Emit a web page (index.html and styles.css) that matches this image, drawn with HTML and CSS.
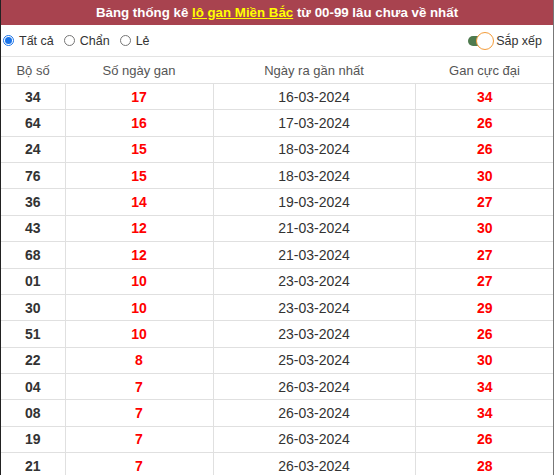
FILE: index.html
```html
<!DOCTYPE html>
<html lang="vi">
<head>
<meta charset="utf-8">
<link rel="stylesheet" href="styles.css">
</head>
<body>
<div class="box">
  <div class="title">Bảng thống kê <a href="#" class="hl">lô gan Miền Bắc</a> từ 00-99 lâu chưa về nhất</div>
  <div class="controls">
    <div class="radios">
      <label class="opt"><span class="radio on"></span>Tất cả</label>
      <label class="opt"><span class="radio"></span>Chẩn</label>
      <label class="opt"><span class="radio"></span>Lẻ</label>
    </div>
    <div class="sort">
      <span class="toggle"><span class="track"></span><span class="knob"></span></span>
      <span>Sắp xếp</span>
    </div>
  </div>
  <table class="tbl">
    <colgroup><col class="c1"><col class="c2"><col class="c3"><col class="c4"></colgroup>
    <thead>
      <tr><th>Bộ số</th><th>Số ngày gan</th><th>Ngày ra gần nhất</th><th>Gan cực đại</th></tr>
    </thead>
    <tbody>
      <tr><td class="n">34</td><td class="r">17</td><td class="d">16-03-2024</td><td class="r">34</td></tr>
      <tr><td class="n">64</td><td class="r">16</td><td class="d">17-03-2024</td><td class="r">26</td></tr>
      <tr><td class="n">24</td><td class="r">15</td><td class="d">18-03-2024</td><td class="r">26</td></tr>
      <tr><td class="n">76</td><td class="r">15</td><td class="d">18-03-2024</td><td class="r">30</td></tr>
      <tr><td class="n">36</td><td class="r">14</td><td class="d">19-03-2024</td><td class="r">27</td></tr>
      <tr><td class="n">43</td><td class="r">12</td><td class="d">21-03-2024</td><td class="r">30</td></tr>
      <tr><td class="n">68</td><td class="r">12</td><td class="d">21-03-2024</td><td class="r">27</td></tr>
      <tr><td class="n">01</td><td class="r">10</td><td class="d">23-03-2024</td><td class="r">27</td></tr>
      <tr><td class="n">30</td><td class="r">10</td><td class="d">23-03-2024</td><td class="r">29</td></tr>
      <tr><td class="n">51</td><td class="r">10</td><td class="d">23-03-2024</td><td class="r">26</td></tr>
      <tr><td class="n">22</td><td class="r">8</td><td class="d">25-03-2024</td><td class="r">30</td></tr>
      <tr><td class="n">04</td><td class="r">7</td><td class="d">26-03-2024</td><td class="r">34</td></tr>
      <tr><td class="n">08</td><td class="r">7</td><td class="d">26-03-2024</td><td class="r">34</td></tr>
      <tr><td class="n">19</td><td class="r">7</td><td class="d">26-03-2024</td><td class="r">26</td></tr>
      <tr><td class="n">21</td><td class="r">7</td><td class="d">26-03-2024</td><td class="r">28</td></tr>
    </tbody>
  </table>
</div>
</body>
</html>
```

FILE: styles.css
```css
html, body {
  margin: 0;
  padding: 0;
  background: #fff;
}
body {
  font-family: "Liberation Sans", Arial, sans-serif;
  color: #333;
}
.box {
  width: 554px;
  box-sizing: border-box;
  border-left: 1px solid #222;
  border-right: 1px solid #777;
  height: 475px;
  overflow: hidden;
}
.title {
  background: #a8434f;
  color: #fff;
  font-weight: bold;
  font-size: 13.3px;
  height: 25px;
  line-height: 25px;
  text-align: center;
}
.title .hl {
  color: #ffff00;
  text-decoration: underline;
}
.controls {
  display: flex;
  justify-content: space-between;
  align-items: center;
  height: 31px;
  padding: 0 11px 0 2px;
  font-size: 12.5px;
  color: #333;
  border-bottom: 1px solid #e3e3e3;
}
.radios {
  display: flex;
  align-items: center;
  gap: 10px;
}
.opt {
  display: flex;
  align-items: center;
  gap: 5px;
}
.radio {
  width: 11px;
  height: 11px;
  border: 1px solid #767676;
  border-radius: 50%;
  box-sizing: border-box;
  background: #fff;
  position: relative;
}
.radio.on {
  border: 1px solid #1a73e8;
}
.radio.on::after {
  content: "";
  position: absolute;
  left: 1px;
  top: 1px;
  width: 7px;
  height: 7px;
  border-radius: 50%;
  background: #1a73e8;
}
.sort {
  display: flex;
  align-items: center;
  gap: 2px;
}
.toggle {
  position: relative;
  width: 26px;
  height: 18px;
  display: inline-block;
}
.track {
  position: absolute;
  left: 0;
  top: 4px;
  width: 20px;
  height: 10px;
  border-radius: 5px;
  background: #4e7a4e;
}
.knob {
  position: absolute;
  right: 0;
  top: 0;
  width: 18px;
  height: 18px;
  box-sizing: border-box;
  border-radius: 50%;
  background: #fff;
  border: 1.5px solid #f39c3a;
}
.tbl {
  width: 553px;
  border-collapse: collapse;
  table-layout: fixed;
}
.c1 { width: 64px; }
.c2 { width: 148px; }
.c3 { width: 202px; }
.c4 { width: 139px; }
.tbl th {
  font-weight: normal;
  font-size: 13px;
  color: #555;
  height: 26px;
  padding: 0;
  text-align: center;
  border-bottom: 1px solid #e0e0e0;
}
.tbl td {
  height: 25.36px;
  padding: 0;
  text-align: center;
  font-size: 14px;
  border-bottom: 1px solid #e0e0e0;
  border-left: 1px solid #e0e0e0;
}
.tbl td:first-child { border-left: 0; }
.tbl td.n { font-weight: bold; color: #333; }
.tbl td.r { font-weight: bold; color: #ff0000; }
.tbl td.d { color: #333; }
```
